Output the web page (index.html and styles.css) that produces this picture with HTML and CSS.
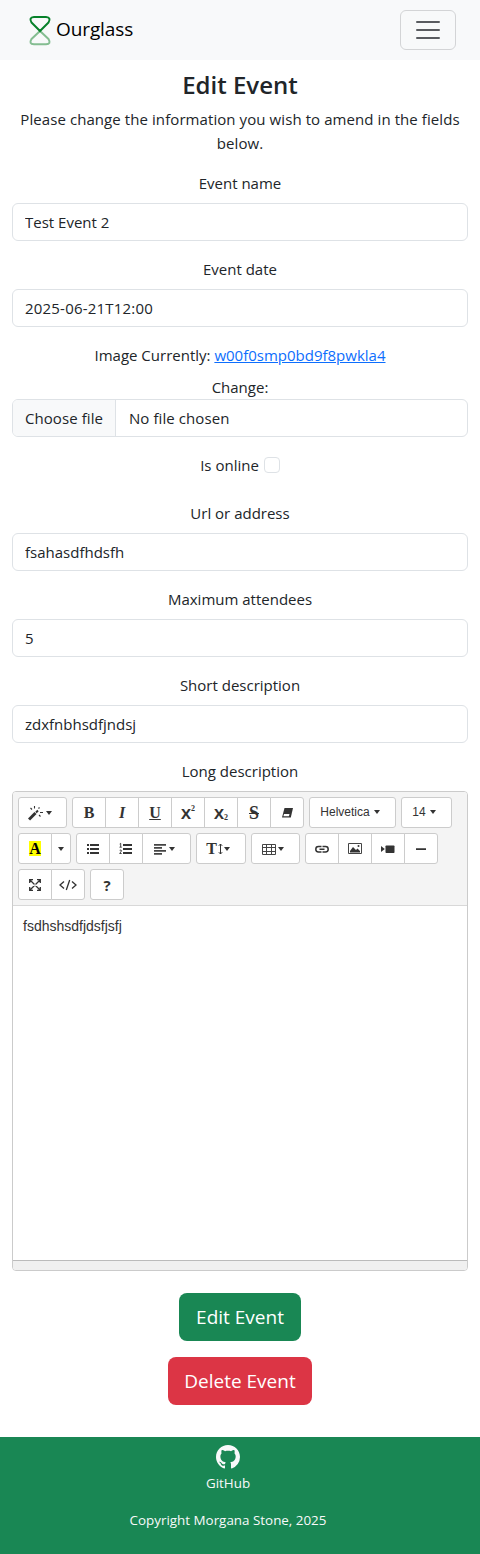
FILE: index.html
```html
<!DOCTYPE html>
<html lang="en">
<head>
<meta charset="utf-8">
<meta name="viewport" content="width=device-width, initial-scale=1">
<title>Ourglass - Edit Event</title>
<link rel="stylesheet" href="styles.css">
</head>
<body>
<header class="navbar">
  <a class="brand" href="#">
    <svg class="logo" width="24" height="32" viewBox="0 0 24 32" fill="none" stroke-width="2" stroke-linejoin="round">
      <path stroke="#84bd91" d="M12 17 L20.5 25 Q23.5 30 18 30.3 H6 Q.5 30 3.500 25 Z"/>
      <path stroke="#07812a" d="M12 17 L3.500 8.500 Q.5 3.500 6 3 H18 Q23.500 3.500 20.500 8.500 Z"/>
    </svg>
    <span class="brand-name">Ourglass</span>
  </a>
  <button class="toggler" aria-label="Toggle navigation">
    <svg width="30" height="30" viewBox="0 0 30 30" stroke="#595b60" stroke-width="2" stroke-linecap="round"><path d="M4 7h22M4 15h22M4 23h22"/></svg>
  </button>
</header>
<main class="content">
  <h1 class="title">Edit Event</h1>
  <p class="intro">Please change the information you wish to amend in the fields below.</p>
  <form>
    <div class="field"><label class="label" for="name">Event name</label><input class="control" id="name" value="Test Event 2"></div>
    <div class="field"><label class="label" for="date">Event date</label><input class="control date" id="date" value="2025-06-21T12:00"></div>
    <div class="field">
      <div class="label current">Image Currently: <a class="link" href="#">w00f0smp0bd9f8pwkla4</a></div>
      <div class="change">Change:</div>
      <div class="file"><span class="file-button">Choose file</span><span class="file-name">No file chosen</span></div>
    </div>
    <div class="field check-field"><label class="label check-row"><span>Is online</span><input class="check" type="checkbox"></label></div>
    <div class="field"><label class="label" for="url">Url or address</label><input class="control" id="url" value="fsahasdfhdsfh"></div>
    <div class="field"><label class="label" for="max">Maximum attendees</label><input class="control" id="max" value="5"></div>
    <div class="field"><label class="label" for="short">Short description</label><input class="control" id="short" value="zdxfnbhsdfjndsj"></div>
    <div class="label">Long description</div>
    <div class="editor">
      <div class="toolbar">
        <div class="group"><button type="button" class="tool menu"><svg width="16" height="16" viewBox="0 0 16 16" stroke="#333" fill="none"><path stroke-width="3" d="M1 14.500L7.500 8"/><path stroke-width="2" d="M8 7.500l2-2"/><path d="M6.500 1v2.500M2.500 3l1.500 1.500M11.500 2.500l-1 1M12 7.500h3M11 10l1.500 1.500" stroke-width="1.100"/></svg><i class="caret"></i></button></div>
        <div class="group">
          <button type="button" class="tool serif">B</button>
          <button type="button" class="tool serif italic">I</button>
          <button type="button" class="tool serif underline">U</button>
          <button type="button" class="tool script"><span>X</span><sup>2</sup></button>
          <button type="button" class="tool script"><span>X</span><sub>2</sub></button>
          <button type="button" class="tool serif strike">S</button>
          <button type="button" class="tool"><svg width="14" height="14" viewBox="0 0 14 14"><path fill="#333" d="M4.500 2h8.500l-2.200 9.500H2z"/><path fill="#fff" d="M4 8h5.500l-.6 2.300H3.400z"/></svg></button>
        </div>
        <div class="group"><button type="button" class="tool menu font">Helvetica<i class="caret"></i></button></div>
        <div class="group"><button type="button" class="tool menu size">14<i class="caret"></i></button></div>
        <div class="group">
          <button type="button" class="tool serif"><span class="highlight">A</span></button>
          <button type="button" class="tool drop"><i class="caret"></i></button>
        </div>
        <div class="group">
          <button type="button" class="tool"><svg width="14" height="14" viewBox="0 0 14 14" fill="#333"><path d="M1 2h2v2H1zM1 6h2v2H1zM1 10h2v2H1zM4 2h9v2H4zM4 6h9v2H4zM4 10h9v2H4z"/></svg></button>
          <button type="button" class="tool"><svg width="14" height="14" viewBox="0 0 14 14"><path fill="#333" d="M4 2h9v2H4zM4 6h9v2H4zM4 10h9v2H4z"/><path fill="none" stroke="#333" stroke-width=".9" d="M.7 2l1-.7V5M.5 5.200h2.300M.7 8.300q1.800-.9 1.800.6L.7 11.500h2"/></svg></button>
          <button type="button" class="tool menu"><svg width="14" height="14" viewBox="0 0 14 14" fill="#444"><path d="M1 2h12v1.700H1zM1 5h8v1.700H1zM1 8h12v1.700H1zM1 11h8v1.700H1z"/></svg><i class="caret"></i></button>
        </div>
        <div class="group"><button type="button" class="tool menu height"><span class="serif">T</span><svg width="5" height="12" viewBox="0 0 5 12" fill="none" stroke="#333"><path d="M2.500 1v10M.8 2.800l1.700-1.800 1.700 1.800M.8 9.200L2.500 11l1.700-1.800"/></svg><i class="caret"></i></button></div>
        <div class="group"><button type="button" class="tool menu"><svg width="15" height="14" viewBox="0 0 15 14" fill="none" stroke="#444"><path d="M1.500 2.500h13v10h-13zM1.500 5.500h13M1.500 9.500h13M5.500 2.500v10M10.500 2.500v10"/></svg><i class="caret"></i></button></div>
        <div class="group">
          <button type="button" class="tool"><svg width="14" height="14" viewBox="0 0 14 14" fill="none" stroke="#333" stroke-width="1.500"><path d="M6.500 10H3.500a2.700 2.700 0 0 1 0-5.400h3M7.500 4.600h3a2.700 2.700 0 0 1 0 5.400h-3M4.500 7.300h5"/></svg></button>
          <button type="button" class="tool"><svg width="16" height="14" viewBox="0 0 16 14"><path fill="none" stroke="#444" d="M1.500 1.500h13v10h-13z"/><path fill="#333" d="M3 10.500V9l3-4 3 3 1.500-1.500L13 9v1.500z"/><circle cx="11.500" cy="4" r="1" fill="#333"/></svg></button>
          <button type="button" class="tool"><svg width="14" height="14" viewBox="0 0 14 14" fill="#333"><rect x="4.500" y="3.500" width="9" height="7.500" rx=".8"/><path d="M0 4l3.800 3L0 10z"/></svg></button>
          <button type="button" class="tool"><svg width="14" height="14" viewBox="0 0 14 14" fill="#333"><path d="M2 6.200h10V8H2z"/></svg></button>
        </div>
        <div class="group">
          <button type="button" class="tool"><svg width="14" height="14" viewBox="0 0 14 14" fill="none" stroke="#333" stroke-width="1.300"><path d="M2 2l10 10M12 2L2 12M1.700 5V1.700H5M9 1.700h3.300V5M12.300 9v3.300H9M5 12.300H1.700V9"/><path fill="#fff" stroke="none" d="M7 5.900L8.100 7 7 8.100 5.900 7z"/></svg></button>
          <button type="button" class="tool"><svg width="18" height="14" viewBox="0 0 18 14" fill="none" stroke="#333" stroke-width="1.300"><path d="M5 3.500L1 7l4 3.500M13 3.500L17 7l-4 3.500M10.700 2L7.300 12"/></svg></button>
        </div>
        <div class="group"><button type="button" class="tool help">?</button></div>
      </div>
      <div class="editable" contenteditable="true" spellcheck="false">fsdhshsdfjdsfjsfj</div>
      <div class="statusbar"></div>
    </div>
    <div class="actions">
      <button type="button" class="action save">Edit Event</button>
      <button type="button" class="action delete">Delete Event</button>
    </div>
  </form>
</main>
<footer class="footer">
  <svg width="24" height="24" viewBox="0 0 16 16" fill="#f8f9fa"><path d="M8 0C3.580 0 0 3.580 0 8c0 3.540 2.290 6.530 5.470 7.590.4.070.55-.17.55-.38 0-.19-.01-.82-.01-1.490-2.010.37-2.530-.49-2.690-.94-.09-.23-.48-.94-.82-1.130-.28-.15-.68-.52-.01-.53.63-.01 1.080.58 1.230.82.72 1.210 1.870.87 2.330.66.07-.52.28-.87.51-1.070-1.780-.2-3.640-.89-3.640-3.950 0-.87.31-1.590.82-2.150-.08-.2-.36-1.020.08-2.120 0 0 .67-.21 2.200.82.64-.18 1.320-.27 2-.27s1.360.09 2 .27c1.530-1.040 2.200-.82 2.200-.82.44 1.100.16 1.920.08 2.120.51.56.82 1.270.82 2.150 0 3.070-1.870 3.750-3.650 3.950.29.25.54.73.54 1.480 0 1.070-.01 1.930-.01 2.200 0 .21.15.46.55.38A8.010 8.010 0 0 0 16 8c0-4.420-3.580-8-8-8z"/></svg>
  <a class="github" href="#">GitHub</a>
  <p class="copyright">Copyright Morgana Stone, 2025</p>
</footer>
</body>
</html>
```
FILE: styles.css
```css
* { box-sizing: border-box; }
body { margin: 0; background: #fff; color: #212529; font: 15px/24px "Open Sans", "Noto Sans", sans-serif; }
button, input { font: inherit; color: inherit; letter-spacing: inherit; }
.navbar { height: 60px; padding: 0 24px 0 28px; background: #f8f9fa; display: flex; align-items: center; justify-content: space-between; }
.brand { display: flex; align-items: center; gap: 4px; color: #000; text-decoration: none; }
.brand-name { font-size: 19px; line-height: 30px; padding-bottom: 2px; letter-spacing: -.1px; }
.toggler { width: 56px; height: 40px; padding: 0; border: 1px solid #d3d4d6; border-radius: 6px; background: transparent; display: flex; align-items: center; justify-content: center; }
.content { padding: 11px 12px 0; text-align: center; }
.title { margin: 0 0 8px; font-size: 24px; line-height: 28px; font-weight: 600; }
.intro { margin: 0 -4px 16px; letter-spacing: .08px; }
.field { margin-bottom: 16px; }
.check-field { margin-bottom: 24px; }
.label { display: block; margin-bottom: 8px; line-height: 24px; }
.link { color: #0d6efd; text-decoration: underline; }
.control { display: block; width: 100%; height: 38px; padding: 6px 12px; border: 1px solid #dee2e6; border-radius: 6px; background: #fff; }
.date { letter-spacing: .2px; }
.file { display: flex; height: 38px; border: 1px solid #dee2e6; border-radius: 6px; overflow: hidden; line-height: 36px; letter-spacing: .08px; }
.file-button { width: 103px; background: #f8f9fa; border-right: 1px solid #dee2e6; }
.file-name { padding-left: 13px; }
.check-row { display: flex; justify-content: center; gap: 5px; }
.check { appearance: none; width: 16px; height: 16px; margin: 4px 0 0; border: 1px solid #dee2e6; border-radius: 4px; }
.editor { height: 480px; border: 1px solid #cbcbcb; border-radius: 4px; overflow: hidden; display: flex; flex-direction: column; text-align: left; }
.toolbar { display: flex; flex-wrap: wrap; gap: 5px; padding: 5px 0 5px 5px; background: #f4f4f4; border-bottom: 1px solid #d8d8d8; }
.group { display: flex; }
.tool { width: 34px; height: 31px; padding: 0; border: 1px solid #ccc; background: #fff; color: #333; display: flex; align-items: center; justify-content: center; font: 12px/18px "Liberation Sans", Arial, sans-serif; }
.tool + .tool { margin-left: -1px; }
.tool:first-child { border-radius: 3px 0 0 3px; }
.tool:last-child { border-radius: 0 3px 3px 0; }
.tool:only-child { border-radius: 3px; }
.menu { width: 49px; gap: 2px; padding-right: 6px; }
.caret { width: 0; height: 0; border: 3.500px solid transparent; border-top: 4px solid #333; border-bottom: 0; margin-top: 1px; }
.tool.serif, .serif { font: bold 16px/18px "Liberation Serif", serif; }
.tool.italic { font-style: italic; }
.underline { text-decoration: underline; }
.tool.strike { text-decoration: line-through; font-size: 18px; }
.tool.script { font: bold 15px/18px "Open Sans", sans-serif; }
.script sup, .script sub { font: bold 8px/8px "Liberation Serif", serif; }
.script sup { margin-bottom: 8px; }
.script sub { margin-top: 10px; }
.menu.font { width: 87px; gap: 4px; padding: 0 5px 2px 0; }
.menu.size { width: 51px; gap: 4px; padding: 0 5px 2px 0; }
.drop { width: 20px; }
.highlight { width: 12px; height: 15px; line-height: 15px; background: #ff0; color: #000; text-align: center; }
.menu.height { width: 50px; gap: 1px; }
.tool.help { font: bold 15px/18px "Open Sans", sans-serif; }
.editable { flex: 1; padding: 10px; color: #333; font: 14px/20px "Liberation Sans", Arial, sans-serif; outline: none; }
.statusbar { height: 10px; background: #f0f0f0; border-top: 1px solid #bbb; }
.actions { display: flex; flex-direction: column; align-items: center; gap: 16px; padding-top: 22px; }
.action { height: 48px; padding: 0; border: 0; border-radius: 8px; color: #fff; font-size: 19px; line-height: 30px; }
.save { width: 122px; background: #198754; }
.delete { width: 144px; background: #dc3545; }
.footer { height: 117px; margin-top: 32px; padding: 8px 24px 0 0; background: #198754; color: #f8f9fa; display: flex; flex-direction: column; align-items: center; font-size: 13.400px; line-height: 20px; }
.github { color: inherit; text-decoration: none; margin-top: 4px; }
.copyright { margin: 17px 0 0; }
```
